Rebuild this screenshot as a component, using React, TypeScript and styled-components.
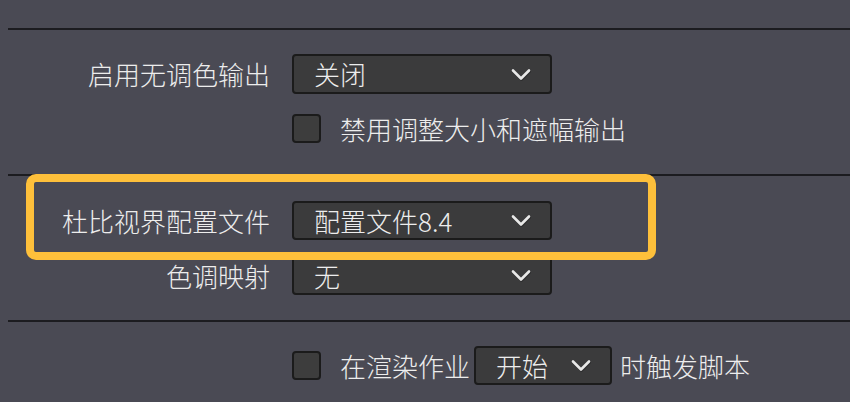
import styled, { createGlobalStyle } from "styled-components";

const GlobalStyle = createGlobalStyle`
  html, body {
    margin: 0;
    padding: 0;
    background: #4a4a54;
  }
  body {
    font-family: "Noto Sans CJK SC", "Noto Sans", sans-serif;
    font-weight: 300;
    color: #ededed;
  }
`;

const Page = styled.div`
  position: relative;
  width: 850px;
  height: 402px;
  overflow: hidden;
  padding: 28px 0 0 8px;
  box-sizing: border-box;
`;

const Divider = styled.div`
  height: 2px;
  background: #1c1c20;
`;

interface SectionProps {
  top: number;
  bottom: number;
  gap?: number;
}

const Section = styled.div<SectionProps>`
  display: flex;
  flex-direction: column;
  gap: ${(p) => p.gap ?? 0}px;
  padding-top: ${(p) => p.top}px;
  padding-bottom: ${(p) => p.bottom}px;
`;

interface RowProps {
  h: number;
}

const Row = styled.div<RowProps>`
  display: grid;
  grid-template-columns: 262px auto;
  column-gap: 22px;
  align-items: center;
  height: ${(p) => p.h}px;
`;

const Label = styled.div`
  text-align: right;
  font-size: 26px;
  line-height: 1;
  white-space: nowrap;
`;

interface SelectProps {
  w: number;
  h: number;
}

const Select = styled.div<SelectProps>`
  display: flex;
  align-items: center;
  justify-content: space-between;
  width: ${(p) => p.w}px;
  height: ${(p) => p.h}px;
  box-sizing: border-box;
  padding: 0 19px 0 20px;
  background: #3b3b3c;
  border: 2px solid #1b1b1b;
  border-radius: 4px;
  font-size: 26px;
  line-height: 1;
  white-space: nowrap;
`;

const Chevron = () => (
  <svg width="20" height="13" viewBox="0 0 20 13">
    <polyline
      points="2,2.5 10,10.5 18,2.5"
      fill="none"
      stroke="#1f1f1f"
      strokeWidth="3"
      strokeLinecap="round"
      strokeLinejoin="round"
      transform="translate(0.5,1)"
      opacity="0.5"
    />
    <polyline
      points="2,2.5 10,10.5 18,2.5"
      fill="none"
      stroke="#e8e8e8"
      strokeWidth="2.6"
      strokeLinecap="round"
      strokeLinejoin="round"
    />
  </svg>
);

const CheckLine = styled.div`
  display: flex;
  align-items: center;
  font-size: 26px;
  line-height: 1;
  white-space: nowrap;
`;

const CheckBox = styled.div`
  width: 29px;
  height: 29px;
  box-sizing: border-box;
  background: #3d3d3d;
  border: 2px solid #1b1b1b;
  border-radius: 4px;
  margin-right: 19px;
  flex-shrink: 0;
`;

interface InlineTextProps {
  left?: number;
  right?: number;
}

const InlineText = styled.span<InlineTextProps>`
  margin-left: ${(p) => p.left ?? 0}px;
  margin-right: ${(p) => p.right ?? 0}px;
`;

const Highlight = styled.div`
  position: absolute;
  left: 26px;
  top: 174px;
  width: 630px;
  height: 86px;
  box-sizing: border-box;
  border: 8px solid #fec03b;
  border-radius: 10px;
  pointer-events: none;
`;

export default function App() {
  return (
    <>
      <GlobalStyle />
      <Page>
        <Divider />
        <Section top={24} bottom={31} gap={20}>
          <Row h={40}>
            <Label>启用无调色输出</Label>
            <Select w={260} h={40}>
              <span>关闭</span>
              <Chevron />
            </Select>
          </Row>
          <Row h={29}>
            <span />
            <CheckLine>
              <CheckBox />
              禁用调整大小和遮幅输出
            </CheckLine>
          </Row>
        </Section>
        <Divider />
        <Section top={25} bottom={25} gap={16}>
          <Row h={39}>
            <Label>杜比视界配置文件</Label>
            <Select w={260} h={39}>
              <span>配置文件8.4</span>
              <Chevron />
            </Select>
          </Row>
          <Row h={39}>
            <Label>色调映射</Label>
            <Select w={260} h={39}>
              <span>无</span>
              <Chevron />
            </Select>
          </Row>
        </Section>
        <Divider />
        <Section top={24} bottom={0}>
          <Row h={39}>
            <span />
            <CheckLine>
              <CheckBox />
              <InlineText right={4}>在渲染作业</InlineText>
              <Select w={138} h={39}>
                <span>开始</span>
                <Chevron />
              </Select>
              <InlineText left={8}>时触发脚本</InlineText>
            </CheckLine>
          </Row>
        </Section>
        <Highlight />
      </Page>
    </>
  );
}
